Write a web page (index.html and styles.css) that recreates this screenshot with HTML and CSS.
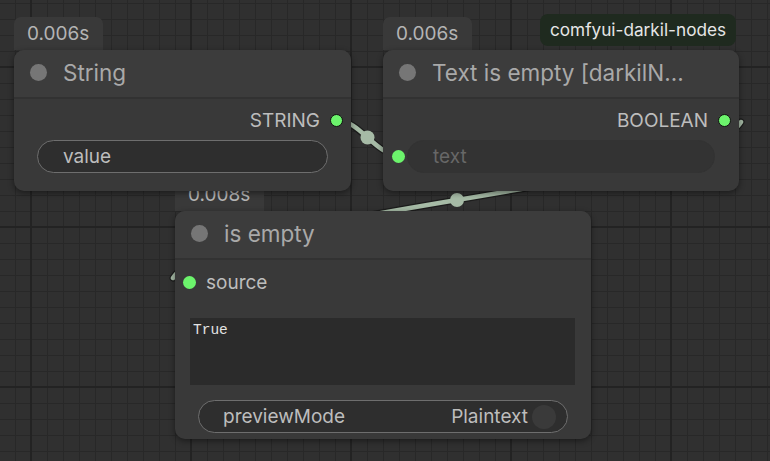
FILE: index.html
```html
<!DOCTYPE html>
<html lang="en">
  <head>
    <meta charset="UTF-8" />
    <meta name="viewport" content="width=device-width, initial-scale=1.0" />
    <title>ComfyUI</title>
    <link rel="stylesheet" href="styles.css">
  </head>
  <body>
    <div class="canvas">
      <!-- links are drawn under the nodes -->
      <svg class="links" width="770" height="461" viewBox="0 0 770 461">
        <g class="link-shade">
          <path d="M336 120 C360 120 375 155 399 155" />
          <path d="M741 122 C700 190 214 210 173 278" />
        </g>
        <g class="link-line">
          <path d="M336 120 C360 120 375 155 399 155" />
          <path d="M741 122 C700 190 214 210 173 278" />
        </g>
        <g class="link-mid">
          <circle cx="367.5" cy="137.5" r="7" />
          <circle cx="457" cy="200" r="7" />
        </g>
      </svg>

      <div class="node node-empty">
        <div class="node-time">0.008s</div>
        <div class="node-box">
          <div class="node-title"><span class="title-dot"></span>is empty</div>
          <div class="node-body body-empty">
            <div class="slot slot-in">
              <span class="slot-dot"></span>
              <span class="slot-label">source</span>
            </div>
            <div class="preview">True</div>
            <div class="combo">
              <span>previewMode</span>
              <span class="combo-value">Plaintext<span class="combo-knob"></span></span>
            </div>
          </div>
        </div>
      </div>

      <div class="node node-string">
        <div class="node-time">0.006s</div>
        <div class="node-box">
          <div class="node-title"><span class="title-dot"></span>String</div>
          <div class="node-body">
            <div class="slot slot-out">
              <span class="slot-label">STRING</span>
              <span class="slot-dot"></span>
            </div>
            <div class="widget-row">
              <div class="field">value</div>
            </div>
          </div>
        </div>
      </div>

      <div class="node node-text">
        <div class="node-time">0.006s</div>
        <div class="node-box">
          <div class="node-title"><span class="title-dot"></span>Text is empty [darkilN...</div>
          <div class="node-body">
            <div class="slot slot-out">
              <span class="slot-label">BOOLEAN</span>
              <span class="slot-dot"></span>
            </div>
            <div class="widget-row linked">
              <span class="slot-dot plain"></span>
              <div class="field field-off">text</div>
            </div>
          </div>
        </div>
      </div>

      <div class="pack-tag">comfyui-darkil-nodes</div>
    </div>
  </body>
</html>
```

FILE: styles.css
```css
* {
  box-sizing: border-box;
}
body {
  margin: 0px;
  background: #2f2f2f;
  font-family: Inter, "Liberation Sans", sans-serif;
}
.canvas {
  position: relative;
  width: 770px;
  height: 461px;
  overflow: hidden;
  background-color: #303030;
  background-image:
    linear-gradient(90deg, #232323 2px, transparent 2px),
    linear-gradient(#232323 2px, transparent 2px),
    linear-gradient(90deg, #282828 1px, transparent 1px),
    linear-gradient(#282828 1px, transparent 1px);
  background-size: 160px 160px, 160px 160px, 16px 16px, 16px 16px;
  background-position: 30px 0, 0 66px, 15px 0, 0 3px;
}

/* links */
.links {
  position: absolute;
  left: 0px;
  top: 0px;
}
.links path {
  fill: none;
  stroke-linecap: round;
}
.link-shade path {
  stroke: #1c1c1c;
  stroke-width: 7;
}
.link-line path {
  stroke: #a6bba6;
  stroke-width: 4.5;
}
.link-mid circle {
  fill: #a6bba6;
}

/* nodes */
.node {
  position: absolute;
}
.node-string {
  left: 14px;
  top: 17px;
  width: 337px;
}
.node-text {
  left: 383px;
  top: 17px;
  width: 356px;
}
.node-empty {
  left: 175px;
  top: 178px;
  width: 416px;
}
.node-time {
  width: 89px;
  height: 33px;
  padding-left: 13px;
  line-height: 33px;
  font-size: 19px;
  color: #b4b4b4;
  background: #393939;
  border-radius: 7px 7px 0 0;
}
.node-box {
  background: #393939;
  border-radius: 10px;
  box-shadow: 0 2px 6px rgba(0, 0, 0, 0.45);
  overflow: hidden;
}
.node-title {
  display: flex;
  align-items: center;
  gap: 16px;
  height: 49px;
  padding: 0 0 2px 16px;
  font-size: 22.5px;
  color: #a9a9a9;
  background: #3c3c3c;
  border-bottom: 2px solid #323232;
  white-space: nowrap;
}
.title-dot {
  width: 17px;
  height: 17px;
  border-radius: 50%;
  background: #767676;
  flex: none;
}
.node-body {
  display: flex;
  flex-direction: column;
  padding: 8px 0 18px;
}
.slot {
  display: flex;
  align-items: center;
  height: 26px;
  font-size: 19px;
  color: #bdbdbd;
}
.slot-out {
  justify-content: flex-end;
  gap: 10px;
  padding-right: 8px;
}
.slot-dot {
  width: 13px;
  height: 13px;
  border-radius: 50%;
  background: #6cf46c;
  border: 1px solid #111;
  flex: none;
}
.slot-dot.plain {
  border: none;
}
.widget-row {
  display: flex;
  align-items: center;
  margin-top: 7px;
  padding: 0 23px;
}
.widget-row.linked {
  gap: 2px;
  padding: 0 24px 0 9px;
}
.field {
  flex: 1;
  height: 33px;
  padding-left: 25px;
  line-height: 31px;
  font-size: 19px;
  color: #bdbdbd;
  background: #2e2e2e;
  border: 1px solid #6e6e6e;
  border-radius: 17px;
}
.field-off {
  color: #676767;
  background: #333333;
  border-color: #333333;
}

/* is empty node */
.body-empty {
  padding: 9px 0 6px;
}
.slot-in {
  gap: 10px;
  padding-left: 8px;
}
.slot-in .slot-dot {
  border: none;
}
.preview {
  height: 67px;
  margin: 23px 16px 0 15px;
  padding: 4px 3px;
  font-family: "Liberation Mono", "DejaVu Sans Mono", monospace;
  font-size: 14.5px;
  line-height: 17px;
  color: #e2e2e2;
  background: #2b2b2b;
}
.combo {
  display: flex;
  align-items: center;
  justify-content: space-between;
  height: 33px;
  margin: 15px 23px 0;
  padding: 0 11px 0 24px;
  font-size: 19px;
  color: #bdbdbd;
  background: #2e2e2e;
  border: 1px solid #6e6e6e;
  border-radius: 17px;
}
.combo-value {
  display: flex;
  align-items: center;
  gap: 4px;
}
.combo-knob {
  width: 24px;
  height: 24px;
  border-radius: 50%;
  background: #3a3a3a;
}

.pack-tag {
  position: absolute;
  left: 540px;
  top: 14px;
  height: 32px;
  padding: 0 10px;
  line-height: 32px;
  font-size: 17.2px;
  color: #e6e6e6;
  background: #1f2a1f;
  border-radius: 8px;
}
```
